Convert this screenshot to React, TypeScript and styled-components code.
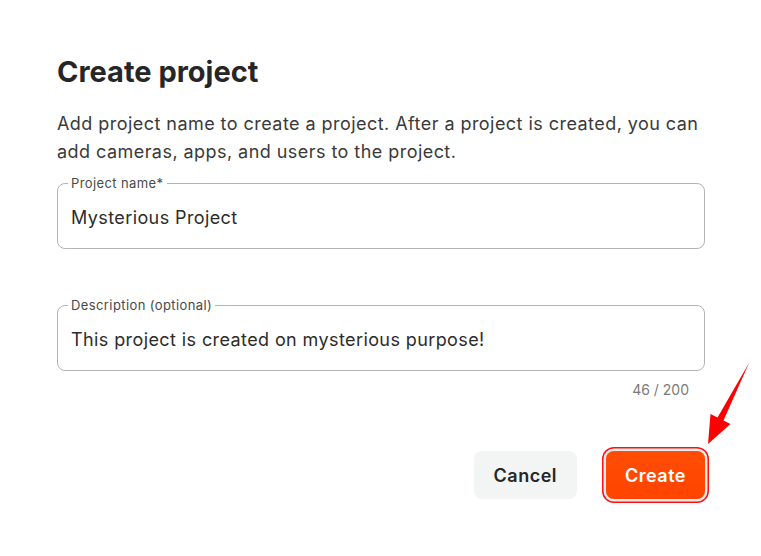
import React from 'react'
import styled, { createGlobalStyle } from 'styled-components'

const GlobalStyle = createGlobalStyle`
  html, body {
    margin: 0;
    padding: 0;
    background: #ffffff;
  }
  body {
    font-family: Inter, "Noto Sans", Roboto, sans-serif;
    color: #262626;
  }
`

const Page = styled.div`
  position: relative;
  width: 761px;
  height: 556px;
  overflow: hidden;
  background: #ffffff;
`

const Dialog = styled.div`
  width: 648px;
  padding: 52px 0 0 57px;
  display: flex;
  flex-direction: column;
`

const Title = styled.h2`
  margin: 0;
  font-size: 29px;
  line-height: 40px;
  font-weight: 700;
  color: #262626;
`

const Intro = styled.p`
  margin: 18px 0 0;
  font-size: 18px;
  line-height: 28px;
  letter-spacing: 0.45px;
  color: #3a3a3a;
`

const Field = styled.fieldset<{ $spaced?: boolean }>`
  margin: ${(p) => (p.$spaced ? '48px' : '9px')} 0 0;
  padding: 0 13px;
  height: 74px;
  box-sizing: border-box;
  border: 1px solid #b4b4b4;
  border-radius: 8px;
  min-width: 0;
`

const Legend = styled.legend`
  padding: 0 3px;
  margin-left: -3px;
  font-size: 13px;
  line-height: 16px;
  letter-spacing: 0.4px;
  color: #4a4a4a;
`

const Value = styled.input`
  display: block;
  width: 100%;
  border: none;
  outline: none;
  padding: 0;
  margin: 14px 0 0;
  font-family: inherit;
  font-size: 18px;
  line-height: 26px;
  letter-spacing: 0.4px;
  color: #2c2c2c;
  background: transparent;
`

const Counter = styled.div`
  align-self: flex-end;
  margin: 10px 16px 0 0;
  font-size: 14px;
  line-height: 18px;
  color: #7a7a7a;
`

const Actions = styled.div`
  display: flex;
  justify-content: flex-end;
  gap: 29px;
  margin-top: 52px;
`

const Button = styled.button<{ $primary?: boolean }>`
  height: 48px;
  padding: 0 ${(p) => (p.$primary ? '19px' : '20px')};
  border: none;
  border-radius: 8px;
  font-family: inherit;
  font-size: 18px;
  font-weight: 600;
  letter-spacing: 0.5px;
  cursor: pointer;
  color: ${(p) => (p.$primary ? '#ffffff' : '#262626')};
  background: ${(p) =>
    p.$primary ? 'linear-gradient(#ff4d05, #ff4400)' : '#f3f4f4'};
  box-shadow: ${(p) =>
    p.$primary ? '0 0 0 2.5px #ececec, 0 0 0 4px #ff1010' : 'none'};
`

const Arrow = styled.svg`
  position: absolute;
  left: 0;
  top: 0;
  pointer-events: none;
`

export default function App() {
  return (
    <Page>
      <GlobalStyle />
      <Dialog>
        <Title>Create project</Title>
        <Intro>
          Add project name to create a project. After a project is created, you
          can add cameras, apps, and users to the project.
        </Intro>
        <Field>
          <Legend>Project name*</Legend>
          <Value defaultValue="Mysterious Project" />
        </Field>
        <Field $spaced>
          <Legend>Description (optional)</Legend>
          <Value defaultValue="This project is created on mysterious purpose!" />
        </Field>
        <Counter>46 / 200</Counter>
        <Actions>
          <Button>Cancel</Button>
          <Button $primary>Create</Button>
        </Actions>
      </Dialog>
      <Arrow width="761" height="556" viewBox="0 0 761 556">
        <polygon
          points="749,363 723.5,420.5 730.5,424 708,444 710.5,414 717.5,417.5"
          fill="#ff0000"
        />
      </Arrow>
    </Page>
  )
}
